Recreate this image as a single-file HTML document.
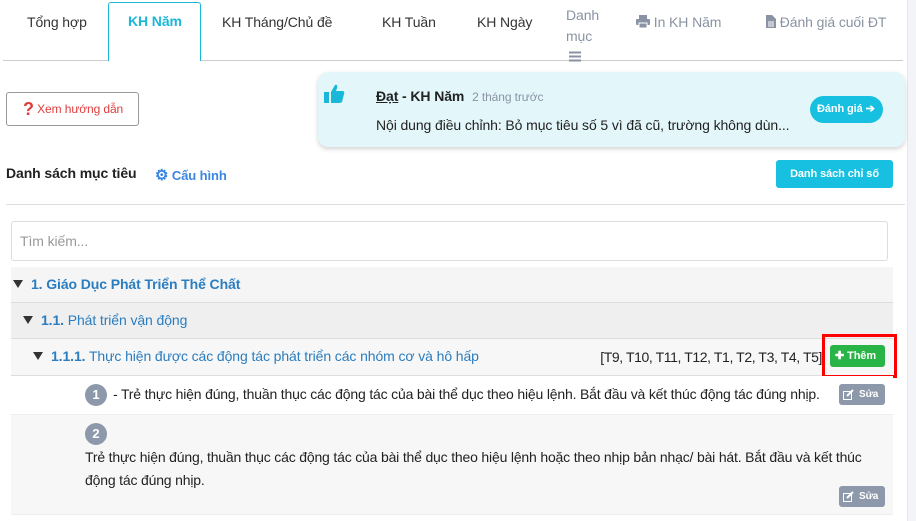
<!DOCTYPE html>
<html><head><meta charset="utf-8"><style>
*{box-sizing:border-box;margin:0;padding:0}
body{width:916px;height:521px;overflow:hidden;background:#fff;font-family:"Liberation Sans",sans-serif;color:#222;position:relative;font-size:14px;letter-spacing:-0.1px}
.a{position:absolute;white-space:nowrap}
.tab{font-size:14px;color:#333;top:14px}
.gray{color:#8a93a3}
.blue{color:#2a7dc0}
.bd{font-weight:bold}
.row{position:absolute;left:11px;width:882px}
.badge{position:absolute;width:22px;height:22px;border-radius:50%;background:#8d99ab;color:#fff;font-weight:bold;font-size:13px;text-align:center;line-height:22px}
.sua{position:absolute;width:46px;height:21px;background:#8d99ab;border-radius:3px;color:#fff;font-size:10px;font-weight:bold;line-height:21px;padding-left:20px}
.tri{display:inline-block;width:0;height:0;border-left:5px solid transparent;border-right:5px solid transparent;border-top:8px solid #333;margin-right:8px;vertical-align:1px}
</style></head><body>
<div class="a" style="left:907px;top:0;width:9px;height:521px;background:#f3f4f8;border-left:1px solid #e6e8ee"></div>
<div class="a" style="left:3px;top:60px;width:900px;height:1px;background:#ccc"></div>
<div class="a" style="left:108px;top:2px;width:93px;height:59px;border:1px solid #1ab8d8;border-bottom:none;background:#fff;border-radius:3px 3px 0 0"></div>
<div class="a tab" style="left:27px">Tổng hợp</div>
<div class="a tab bd" style="left:128px;color:#1ab8d8;top:13px">KH Năm</div>
<div class="a tab" style="left:222px">KH Tháng/Chủ đề</div>
<div class="a tab" style="left:382px">KH Tuần</div>
<div class="a tab" style="left:477px">KH Ngày</div>
<div class="a gray" style="left:566px;top:5px;font-size:14px;line-height:21px">Danh<br>mục</div>
<svg class="a" style="left:569px;top:51px" width="12" height="11"><path d="M0 1.5H12M0 5.5H12M0 9.5H12" stroke="#8a93a3" stroke-width="2"/></svg>
<div class="a tab gray" style="left:636px"><svg width="14" height="13" viewBox="0 0 14 13" style="vertical-align:-1px"><rect x="3" y="0" width="8" height="4" fill="#8a93a3"/><rect x="0" y="4" width="14" height="6" rx="1" fill="#8a93a3"/><rect x="3" y="8" width="8" height="5" fill="#8a93a3" stroke="#fff" stroke-width="1"/></svg> In KH Năm</div>
<div class="a tab gray" style="left:766px"><svg width="10" height="13" viewBox="0 0 10 13" style="vertical-align:-1px"><path d="M0 0H6L10 4V13H0Z" fill="#8a93a3"/><path d="M2 7H8M2 9H8M2 11H8" stroke="#fff"/></svg> Đánh giá cuối ĐT</div>

<div class="a" style="left:6px;top:92px;width:133px;height:34px;border:1px solid #999;border-radius:3px;font-size:12px;color:#e03c3c;line-height:32px;padding-left:16px"><b style="font-size:18px;vertical-align:-2px">?</b> Xem hướng dẫn</div>

<div class="a" style="left:318px;top:72px;width:587px;height:75px;background:#e3f7fb;border-radius:10px;box-shadow:0 2px 5px rgba(0,0,0,.18)"></div>
<svg class="a" style="left:324px;top:83px" width="22" height="22" viewBox="0 0 22 22"><rect x="0" y="9" width="5" height="11" fill="#1ab8d8"/><path d="M7 9L11 2Q14 1 13 5L12 8H19Q21 9 20 11L18 19Q17 20 15 20H7Z" fill="#1ab8d8"/></svg>
<div class="a" style="left:376px;top:88px;font-size:14px"><b><u>Đạt</u> - KH Năm</b> <span style="font-size:12px;color:#8a93a3;margin-left:4px">2 tháng trước</span></div>
<div class="a" style="left:376px;top:117px;font-size:14px">Nội dung điều chỉnh: Bỏ mục tiêu số 5 vì đã cũ, trường không dùn...</div>
<div class="a" style="left:810px;top:96px;width:73px;height:27px;background:#17c0e0;border-radius:14px;color:#fff;font-size:11px;font-weight:bold;line-height:27px;padding-left:7px">Đánh giá ➔</div>

<div class="a bd" style="left:6px;top:165px;font-size:14px">Danh sách mục tiêu</div>
<div class="a bd" style="left:155px;top:166px;font-size:13px;color:#3a86e0"><span style="font-size:15px">⚙</span> Cấu hình</div>
<div class="a" style="left:776px;top:160px;width:117px;height:28px;background:#17c0e0;border-radius:3px;color:#fff;font-size:11px;font-weight:bold;text-align:center;line-height:28px">Danh sách chỉ số</div>
<div class="a" style="left:6px;top:204px;width:899px;height:1px;background:#ddd"></div>

<div class="a" style="left:11px;top:221px;width:877px;height:40px;border:1px solid #ddd;border-radius:3px;color:#999;font-size:14px;line-height:38px;padding-left:8px">Tìm kiếm...</div>

<div class="row" style="top:267px;height:36px;background:#f5f5f5;border-bottom:1px solid #ddd"></div>
<div class="a blue bd" style="left:13px;top:276px;font-size:14px"><span class="tri"></span>1. Giáo Dục Phát Triển Thể Chất</div>
<div class="row" style="top:303px;height:36px;background:#efefef;border-bottom:1px solid #ddd"></div>
<div class="a blue" style="left:23px;top:312px;font-size:14px"><span class="tri"></span><b>1.1.</b> Phát triển vận động</div>
<div class="row" style="top:339px;height:37px;background:#f7f7f7;border-bottom:1px solid #ddd"></div>
<div class="a blue" style="left:33px;top:348px;font-size:14px"><span class="tri"></span><b>1.1.1.</b> Thực hiện được các động tác phát triển các nhóm cơ và hô hấp</div>
<div class="a" style="right:94px;top:349px;font-size:14px;letter-spacing:-0.4px">[T9, T10, T11, T12, T1, T2, T3, T4, T5]</div>
<div class="a" style="left:830px;top:345px;width:55px;height:22px;background:#28b447;border-radius:3px;color:#fff;font-size:11px;font-weight:bold;line-height:22px;padding-left:5px">✚ Thêm</div>
<div class="a" style="left:822px;top:334px;width:75px;height:44px;border:3px solid #f00"></div>

<div class="row" style="top:376px;height:39px;background:#fff;border-bottom:1px solid #eee"></div>
<div class="badge" style="left:85px;top:384px">1</div>
<div class="a" style="left:113px;top:386px;font-size:14px;letter-spacing:-0.18px">- Trẻ thực hiện đúng, thuần thục các động tác của bài thể dục theo hiệu lệnh. Bắt đầu và kết thúc động tác đúng nhịp.</div>
<div class="sua" style="left:839px;top:384px">Sửa</div>

<div class="row" style="top:415px;height:100px;background:#f7f7f7;border-bottom:1px solid #eee"></div>
<div class="badge" style="left:85px;top:423px">2</div>
<div class="a" style="left:85px;top:446px;font-size:14px;line-height:23px;white-space:normal;width:802px;letter-spacing:-0.18px">Trẻ thực hiện đúng, thuần thục các động tác của bài thể dục theo hiệu lệnh hoặc theo nhịp bản nhạc/ bài hát. Bắt đầu và kết thúc động tác đúng nhịp.</div>
<div class="sua" style="left:839px;top:486px">Sửa</div>
<svg class="a" style="left:843px;top:389px" width="12" height="11"><rect x="0.5" y="2.5" width="8" height="8" fill="none" stroke="#fff"/><path d="M4 7L10 1" stroke="#fff" stroke-width="2"/></svg>
<svg class="a" style="left:843px;top:491px" width="12" height="11"><rect x="0.5" y="2.5" width="8" height="8" fill="none" stroke="#fff"/><path d="M4 7L10 1" stroke="#fff" stroke-width="2"/></svg>
</body></html>
